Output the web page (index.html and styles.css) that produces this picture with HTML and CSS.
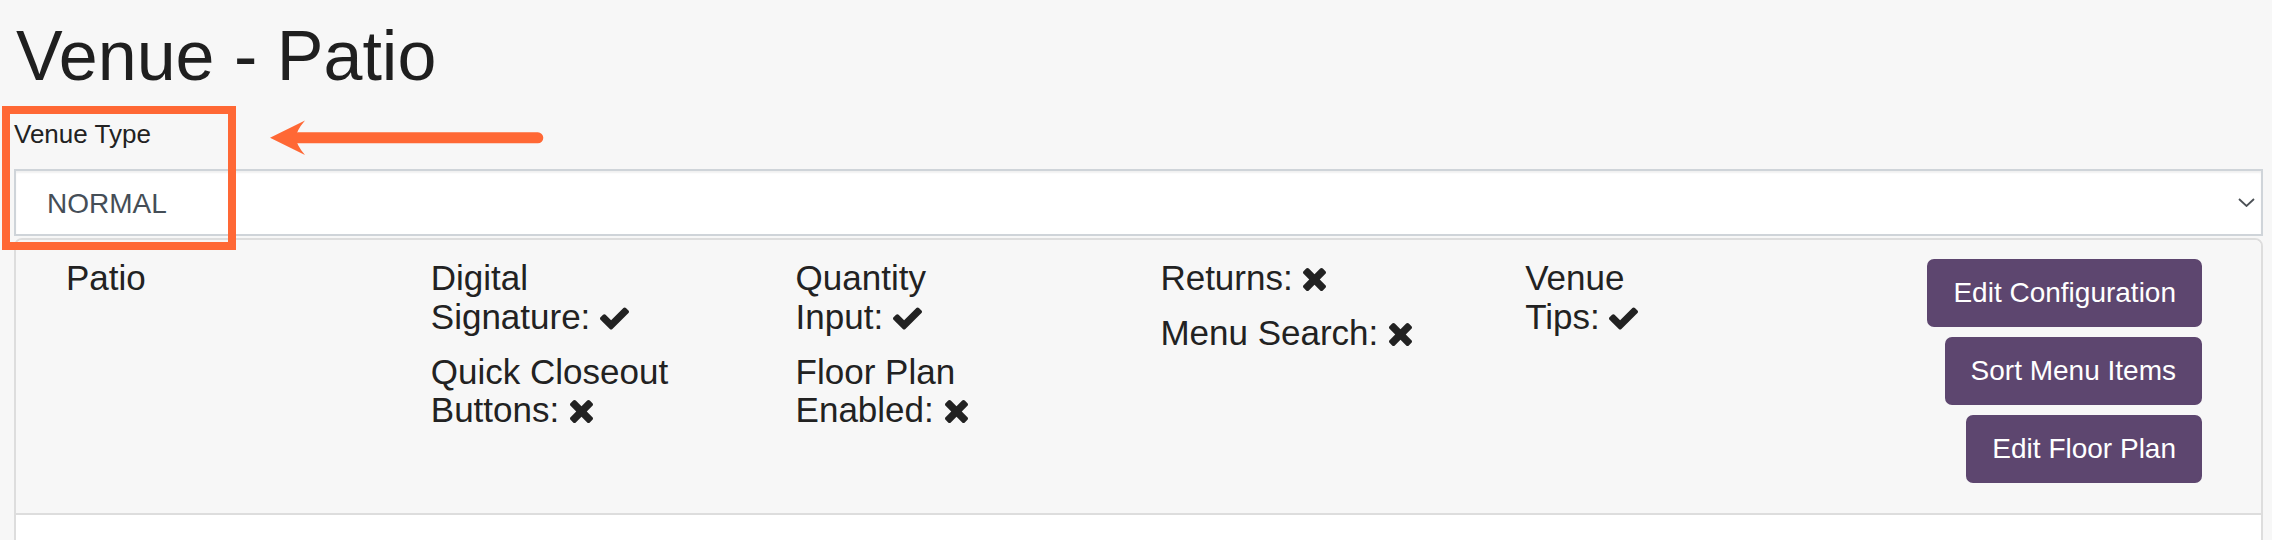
FILE: index.html
```html
<!DOCTYPE html>
<html lang="en">
<head>
<meta charset="utf-8">
<title>Venue - Patio</title>
<link rel="stylesheet" href="styles.css">
</head>
<body>
<div class="page">
  <h1 class="title">Venue - Patio</h1>
  <label class="field-label">Venue Type</label>
  <div class="select" role="combobox">
    <span class="select-value">NORMAL</span>
    <svg class="chevron" viewBox="0 0 17 9" width="17" height="9"><polyline points="1,1 8.5,8 16,1" fill="none" stroke="#4c5156" stroke-width="1.8"/></svg>
  </div>
  <div class="panel">
    <div class="panel-heading">
      <div class="col">
        <div class="item">Patio</div>
      </div>
      <div class="col">
        <div class="item">Digital<br>Signature: <svg class="ico ico-check" viewBox="121 334 1550 1188"><path d="M1671 566q0 40-28 68l-724 724-136 136q-28 28-68 28t-68-28l-136-136-362-362q-28-28-28-68t28-68l136-136q28-28 68-28t68 28l294 295 656-657q28-28 68-28t68 28l136 136q28 28 28 68z"/></svg></div>
        <div class="item">Quick Closeout<br>Buttons: <svg class="ico ico-times" viewBox="110 366 1188 1188"><path d="M1298 1322q0 40-28 68l-136 136q-28 28-68 28t-68-28l-294-294-294 294q-28 28-68 28t-68-28l-136-136q-28-28-28-68t28-68l294-294-294-294q-28-28-28-68t28-68l136-136q28-28 68-28t68 28l294 294 294-294q28-28 68-28t68 28l136 136q28 28 28 68t-28 68l-294 294 294 294q28 28 28 68z"/></svg></div>
      </div>
      <div class="col">
        <div class="item">Quantity<br>Input: <svg class="ico ico-check" viewBox="121 334 1550 1188"><path d="M1671 566q0 40-28 68l-724 724-136 136q-28 28-68 28t-68-28l-136-136-362-362q-28-28-28-68t28-68l136-136q28-28 68-28t68 28l294 295 656-657q28-28 68-28t68 28l136 136q28 28 28 68z"/></svg></div>
        <div class="item">Floor Plan<br>Enabled: <svg class="ico ico-times" viewBox="110 366 1188 1188"><path d="M1298 1322q0 40-28 68l-136 136q-28 28-68 28t-68-28l-294-294-294 294q-28 28-68 28t-68-28l-136-136q-28-28-28-68t28-68l294-294-294-294q-28-28-28-68t28-68l136-136q28-28 68-28t68 28l294 294 294-294q28-28 68-28t68 28l136 136q28 28 28 68t-28 68l-294 294 294 294q28 28 28 68z"/></svg></div>
      </div>
      <div class="col">
        <div class="item">Returns: <svg class="ico ico-times" viewBox="110 366 1188 1188"><path d="M1298 1322q0 40-28 68l-136 136q-28 28-68 28t-68-28l-294-294-294 294q-28 28-68 28t-68-28l-136-136q-28-28-28-68t28-68l294-294-294-294q-28-28-28-68t28-68l136-136q28-28 68-28t68 28l294 294 294-294q28-28 68-28t68 28l136 136q28 28 28 68t-28 68l-294 294 294 294q28 28 28 68z"/></svg></div>
        <div class="item">Menu Search: <svg class="ico ico-times" viewBox="110 366 1188 1188"><path d="M1298 1322q0 40-28 68l-136 136q-28 28-68 28t-68-28l-294-294-294 294q-28 28-68 28t-68-28l-136-136q-28-28-28-68t28-68l294-294-294-294q-28-28-28-68t28-68l136-136q28-28 68-28t68 28l294 294 294-294q28-28 68-28t68 28l136 136q28 28 28 68t-28 68l-294 294 294 294q28 28 28 68z"/></svg></div>
      </div>
      <div class="col">
        <div class="item">Venue<br>Tips: <svg class="ico ico-check" viewBox="121 334 1550 1188"><path d="M1671 566q0 40-28 68l-724 724-136 136q-28 28-68 28t-68-28l-136-136-362-362q-28-28-28-68t28-68l136-136q28-28 68-28t68 28l294 295 656-657q28-28 68-28t68 28l136 136q28 28 28 68z"/></svg></div>
      </div>
      <div class="actions">
        <button class="btn">Edit Configuration</button>
        <button class="btn">Sort Menu Items</button>
        <button class="btn">Edit Floor Plan</button>
      </div>
    </div>
    <div class="panel-body"></div>
  </div>
</div>
<div class="callout-box"></div>
<svg class="callout-arrow" viewBox="0 0 560 170" width="560" height="170">
  <path d="M270 137.7 L305 120.5 Q296 131 296 137.7 Q296 144.5 305 155 Z" fill="#ff6835"/>
  <line x1="298" y1="137.8" x2="537.8" y2="137.8" stroke="#ff6835" stroke-width="11" stroke-linecap="round"/>
</svg>
</body>
</html>
```

FILE: styles.css
```css
html, body {
  margin: 0;
  padding: 0;
  background: #f7f7f7;
  overflow: hidden;
}

body {
  font-family: "Liberation Sans", Arial, Helvetica, sans-serif;
  color: #222;
}

.page {
  padding: 0 9px 0 14px;
}

.title {
  margin: 18px 0 0 2px;
  font-size: 70px;
  line-height: 1.1;
  font-weight: normal;
  color: #1f1f1f;
}

.field-label {
  display: block;
  margin: 24px 0 20px 0;
  font-size: 26px;
  line-height: 30px;
  color: #222;
}

.select {
  box-sizing: border-box;
  height: 67px;
  display: flex;
  align-items: center;
  justify-content: space-between;
  padding: 2px 6px 0 31px;
  background: #fff;
  border: 2px solid #cfd4d9;
  box-shadow: inset 0 2px 2px rgba(0, 0, 0, 0.06);
}

.select-value {
  font-size: 28px;
  color: #454e57;
}

.chevron {
  display: block;
  margin-top: -2px;
}

.panel {
  margin-top: 2px;
  border: 2px solid #dddddd;
  border-radius: 8px;
  background: #fff;
  overflow: hidden;
}

.panel-heading {
  display: flex;
  align-items: flex-start;
  padding: 19px 59px 20px 50px;
  background: #f7f7f7;
  border-bottom: 2px solid #dddddd;
}

.col {
  flex: 0 0 364.8px;
  display: flex;
  flex-direction: column;
  gap: 16.5px;
}

.item {
  font-size: 35px;
  line-height: 1.1;
  color: #222;
}

.ico {
  fill: #222;
  vertical-align: -1px;
}

.ico-check {
  width: 29px;
  height: 23px;
}

.ico-times {
  width: 23px;
  height: 23px;
  margin-left: 1px;
}

.actions {
  flex: 1;
  display: flex;
  flex-direction: column;
  align-items: flex-end;
}

.btn {
  font-family: "Liberation Sans", Arial, Helvetica, sans-serif;
  font-size: 28px;
  line-height: 40px;
  padding: 12px 24px;
  margin: 0 0 10px 0;
  border: 2px solid #5d466f;
  border-radius: 7px;
  background: #5d466f;
  color: #fff;
}

.panel-body {
  height: 60px;
}

.callout-box {
  position: absolute;
  left: 2px;
  top: 106px;
  width: 234px;
  height: 144px;
  box-sizing: border-box;
  border: 8px solid #ff6835;
}

.callout-arrow {
  position: absolute;
  left: 0;
  top: 0;
}
```
